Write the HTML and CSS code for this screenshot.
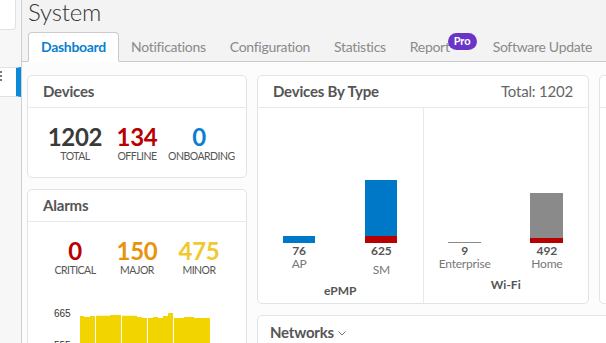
FILE: index.html
```html
<!DOCTYPE html>
<html lang="en">
<head>
<meta charset="UTF-8">
<meta name="viewport" content="width=device-width, initial-scale=1.0">
<title>System Dashboard</title>
<link rel="stylesheet" href="styles.css">
</head>
<body>
<div class="app">
    <aside class="sidebar">
        <div class="side-search"></div>
        <div class="side-item">
            <svg class="grip" width="4" height="14" viewBox="0 0 4 14">
                <rect x="0" y="1" width="2" height="2" fill="#777"/>
                <rect x="0" y="5" width="2" height="2" fill="#777"/>
                <rect x="0" y="9" width="2" height="2" fill="#777"/>
            </svg>
        </div>
    </aside>

    <main class="main">
        <h1 class="page-title">System</h1>
        <nav class="tabs">
            <a class="tab active">Dashboard</a>
            <a class="tab">Notifications</a>
            <a class="tab">Configuration</a>
            <a class="tab">Statistics</a>
            <a class="tab tab-report"><span class="tab-label">Report<span class="pro">Pro</span></span></a>
            <a class="tab">Software Update</a>
        </nav>

        <div class="content">
            <div class="col-left">
                <section class="card">
                    <div class="card-head">Devices</div>
                    <div class="stats">
                        <div class="stat"><div class="num">1202</div><div class="lbl">Total</div></div>
                        <div class="stat"><div class="num red">134</div><div class="lbl">Offline</div></div>
                        <div class="stat"><div class="num blue">0</div><div class="lbl">Onboarding</div></div>
                    </div>
                </section>

                <section class="card">
                    <div class="card-head">Alarms</div>
                    <div class="stats">
                        <div class="stat"><div class="num red">0</div><div class="lbl">Critical</div></div>
                        <div class="stat"><div class="num orange">150</div><div class="lbl">Major</div></div>
                        <div class="stat"><div class="num yellow">475</div><div class="lbl">Minor</div></div>
                    </div>
                    <svg class="alarm-chart" width="218" height="60" viewBox="0 0 218 60">
                        <text x="26" y="17" class="axis">665</text>
                        <text x="26" y="49" class="axis">555</text>
                        <path d="M52 60V16H56V17H62V16H67V60Z" fill="#f2d500"/>
                        <path d="M68 60V15.7H82V15H93V60Z" fill="#f2d500"/>
                        <path d="M94 60V15.7H109V17H114V18H119V60Z" fill="#f2d500"/>
                        <path d="M120 60V18H125V17H130V18H135V16H140V13H145V60Z" fill="#f2d500"/>
                        <path d="M146 60V18H156V17H166V18H182V60Z" fill="#f2d500"/>
                    </svg>
                </section>
            </div>

            <div class="col-right">
                <div class="row">
                    <section class="card by-type">
                        <div class="card-head">Devices By Type <span class="total">Total: 1202</span></div>
                        <div class="types">
                            <div class="type">
                                <div class="type-cols">
                                    <div class="type-col">
                                        <div class="plot">
                                            <div class="seg blue-bg" style="height: 7px"></div>
                                        </div>
                                        <div class="val">76</div>
                                        <div class="name">AP</div>
                                    </div>
                                    <div class="type-col">
                                        <div class="plot">
                                            <div class="seg blue-bg" style="height: 56px"></div>
                                            <div class="seg red-bg" style="height: 7px"></div>
                                        </div>
                                        <div class="val">625</div>
                                        <div class="name low">SM</div>
                                    </div>
                                </div>
                                <div class="type-name">ePMP</div>
                            </div>
                            <div class="type">
                                <div class="type-cols">
                                    <div class="type-col">
                                        <div class="plot">
                                            <div class="seg wide gray-bg" style="height: 1px"></div>
                                        </div>
                                        <div class="val">9</div>
                                        <div class="name">Enterprise</div>
                                    </div>
                                    <div class="type-col">
                                        <div class="plot">
                                            <div class="seg wide gray-bg" style="height: 45px"></div>
                                            <div class="seg wide red-bg" style="height: 5px"></div>
                                        </div>
                                        <div class="val">492</div>
                                        <div class="name">Home</div>
                                    </div>
                                </div>
                                <div class="type-name">Wi-Fi</div>
                            </div>
                        </div>
                    </section>
                    <section class="card stub">
                        <div class="card-head"></div>
                    </section>
                </div>

                <section class="card networks">
                    <div class="card-head net-head">Networks
                        <svg class="chev" width="8" height="5" viewBox="0 0 8 5"><path d="M0.5 0.5L4 4L7.5 0.5" fill="none" stroke="#777" stroke-width="1"/></svg>
                    </div>
                </section>
            </div>
        </div>
    </main>
</div>
</body>
</html>
```

FILE: styles.css
```css
body {
    margin: 0;
    height: 343px;
    overflow: hidden;
    font-family: Lato, "Liberation Sans", sans-serif;
    color: #333;
    background-color: #f3f3f3;
}
.app {
    display: flex;
    height: 100%;
}
.sidebar {
    width: 21px;
    flex: none;
    background-color: #f7f7f7;
    border-right: 1px solid #cfcfcf;
}
.side-search {
    width: 15px;
    height: 29px;
    background-color: #fff;
    border-right: 1px solid #dde2e5;
    border-bottom: 1px solid #dde2e5;
    border-bottom-right-radius: 4px;
}
.side-item {
    margin-top: 37px;
    height: 28px;
    background-color: #fff;
    border-top: 1px solid #dde2e5;
    border-bottom: 1px solid #dde2e5;
    border-right: 5px solid #0a8ad8;
}
.grip {
    display: block;
    margin-top: 2px;
}
.main {
    flex: 1;
    min-width: 0;
    display: flex;
    flex-direction: column;
    overflow: hidden;
}
.page-title {
    margin: 0;
    padding-left: 6px;
    font-size: 24px;
    line-height: 23px;
    font-weight: 300;
    letter-spacing: -0.2px;
    color: #333;
}
.tabs {
    display: flex;
    align-items: flex-start;
    height: 29px;
    margin-top: 9px;
    padding-left: 6px;
    border-bottom: 1px solid #cbcbcb;
}
.tab {
    padding: 0 12px;
    font-size: 14px;
    line-height: 29px;
    letter-spacing: -0.3px;
    color: #8a8a8a;
    white-space: nowrap;
}
.tab.active {
    line-height: 28px;
    color: #0a7fd0;
    font-weight: bold;
    background-color: #fff;
    border: 1px solid #cbcbcb;
    border-bottom-color: #fff;
    border-radius: 4px 4px 0 0;
}
.tab-report {
    padding-right: 31px;
}
.tab-label {
    position: relative;
}
.pro {
    position: absolute;
    left: calc(100% - 2px);
    top: -5px;
    width: 29px;
    height: 17px;
    border-radius: 9px;
    background-color: #6a35c7;
    color: #fff;
    font-size: 11px;
    font-weight: bold;
    line-height: 16px;
    letter-spacing: 0;
    text-align: center;
}
.content {
    flex: 1;
    display: flex;
    align-items: flex-start;
    gap: 10px;
    padding: 13px 0 0 5px;
    background-color: #fcfcfc;
    overflow: hidden;
}
.col-left {
    width: 220px;
    flex: none;
    display: flex;
    flex-direction: column;
    gap: 11px;
}
.col-right {
    flex: none;
    display: flex;
    flex-direction: column;
    gap: 11px;
}
.row {
    display: flex;
    gap: 10px;
}
.card {
    box-sizing: border-box;
    background-color: #fff;
    border: 1px solid #dfe4e7;
    border-radius: 5px;
}
.card-head {
    display: flex;
    justify-content: space-between;
    height: 31px;
    padding: 0 15px;
    border-bottom: 1px solid #e6eaec;
    font-size: 15px;
    line-height: 31px;
    font-weight: bold;
    letter-spacing: -0.2px;
    color: #555;
}
.total {
    font-weight: normal;
    color: #666;
}
.stats {
    display: grid;
    grid-template-columns: repeat(3, 62px);
    justify-content: center;
    padding: 17px 0 14px;
    text-align: center;
}
.num {
    font-size: 24px;
    line-height: 24px;
    font-weight: bold;
    letter-spacing: -0.3px;
    color: #3a3a3a;
}
.lbl {
    margin-top: 1px;
    font-size: 10.5px;
    line-height: 13px;
    letter-spacing: -0.5px;
    color: #555;
    text-transform: uppercase;
    white-space: nowrap;
}
.red { color: #b80000; }
.blue { color: #0a7fd0; }
.orange { color: #e8930c; }
.yellow { color: #f0c92f; }
.alarm-chart {
    display: block;
    margin-top: 9px;
}
.axis {
    font-family: "Liberation Sans", Arial, sans-serif;
    font-size: 10px;
    fill: #333;
}
.by-type {
    width: 332px;
}
.stub {
    width: 200px;
}
.types {
    display: flex;
}
.type {
    flex: 1;
    padding-bottom: 6px;
}
.type + .type {
    border-left: 1px solid #e6eaec;
}
.type-cols {
    display: flex;
}
.type-col {
    flex: 1;
    display: flex;
    flex-direction: column;
    align-items: center;
}
.plot {
    height: 135px;
    display: flex;
    flex-direction: column;
    justify-content: flex-end;
}
.seg {
    width: 32px;
}
.seg.wide {
    width: 33px;
}
.blue-bg { background-color: #0078c8; }
.red-bg { background-color: #b80000; }
.gray-bg { background-color: #8a8a8a; }
.val {
    margin-top: 2px;
    font-size: 12px;
    line-height: 12px;
    font-weight: bold;
    color: #555;
}
.name {
    margin-top: 1px;
    font-size: 12px;
    line-height: 12px;
    letter-spacing: -0.2px;
    color: #777;
}
.name.low {
    padding-top: 6px;
}
.type-name {
    margin-top: 9px;
    text-align: center;
    font-size: 12px;
    line-height: 12px;
    font-weight: bold;
    color: #555;
}
.networks {
    width: 542px;
    height: 40px;
}
.net-head {
    justify-content: flex-start;
    align-items: center;
    gap: 4px;
    padding: 1px 12px 0;
    border-bottom: none;
}
.chev {
    margin-top: 2px;
}
```
